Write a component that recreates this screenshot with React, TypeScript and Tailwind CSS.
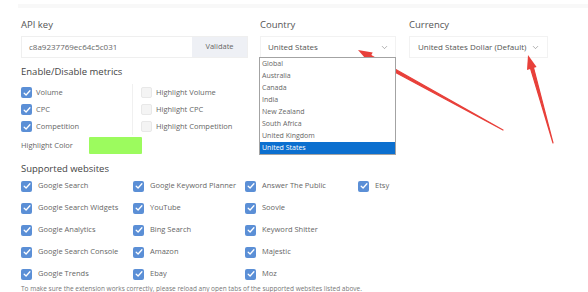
import React from 'react';
import { ChevronDown } from 'lucide-react';

const countries = ['Global', 'Australia', 'Canada', 'India', 'New Zealand', 'South Africa', 'United Kingdom', 'United States'];

const sites = [
  ['Google Search', 'Google Keyword Planner', 'Answer The Public', 'Etsy'],
  ['Google Search Widgets', 'YouTube', 'Soovle', ''],
  ['Google Analytics', 'Bing Search', 'Keyword Shitter', ''],
  ['Google Search Console', 'Amazon', 'Majestic', ''],
  ['Google Trends', 'Ebay', 'Moz', ''],
];

const Box: React.FC<{ checked?: boolean }> = ({ checked = true }) =>
  checked ? (
    <span className="w-[11px] h-[11px] rounded-[2px] bg-[#5b8fd6] flex items-center justify-center shrink-0">
      <svg width="8" height="8" viewBox="0 0 8 8">
        <path d="M1.2 4.2 L3.1 6 L6.9 1.8" fill="none" stroke="white" strokeWidth="1.3" strokeLinecap="round" strokeLinejoin="round" />
      </svg>
    </span>
  ) : (
    <span className="w-[11px] h-[11px] rounded-[2px] bg-[#f4f4f4] border border-[#e8e8e8] shrink-0" />
  );

const Metric: React.FC<{ label: string; checked?: boolean }> = ({ label, checked }) => (
  <div className="h-[17px] flex items-center gap-[4px]">
    <Box checked={checked} />
    <span className="text-[7.5px] text-[#666]">{label}</span>
  </div>
);

const App: React.FC = () => {
  return (
    <div className="relative w-[588px] h-[292px] overflow-hidden bg-white" style={{ fontFamily: '"Open Sans", "Noto Sans", sans-serif' }}>
      <div className="h-[4px] mt-[4px] ml-[18px] bg-[#f8f8f8]"></div>

      <div className="pl-[21px] pt-[11px]">
        <div className="flex">
          <div className="w-[227px]">
            <div className="text-[9.5px] leading-[12px] text-[#555]">API key</div>
            <div className="mt-[5px] flex h-[22px] border border-[#efefef]">
              <div className="flex-1 flex items-center pl-[7px] text-[8px] text-[#666]">c8a9237769ec64c5c031</div>
              <div className="w-[55px] bg-[#eef0f5] flex items-center justify-center text-[7.5px] text-[#666]">Validate</div>
            </div>
          </div>

          <div className="w-[136px] ml-[12px]">
            <div className="text-[9.5px] leading-[12px] text-[#555]">Country</div>
            <div className="relative mt-[5px]">
              <div className="flex items-center justify-between h-[22px] border border-[#f2f2f2] pl-[7px] pr-[6px] text-[8px] text-[#555]">
                <span>United States</span>
                <ChevronDown className="w-[9px] h-[9px] text-[#777]" strokeWidth={1.5} />
              </div>
              <div className="absolute left-[-1px] top-[21px] w-[137px] border border-[#a3a3a3] bg-white z-10">
                {countries.map((c) => (
                  <div
                    key={c}
                    className={
                      c === 'United States'
                        ? 'h-[12px] flex items-center pl-[2px] text-[7px] bg-[#0b6fcf] text-white'
                        : 'h-[12px] flex items-center pl-[2px] text-[7px] text-[#666]'
                    }
                  >
                    {c}
                  </div>
                ))}
              </div>
            </div>
          </div>

          <div className="w-[139px] ml-[13px]">
            <div className="text-[9.5px] leading-[12px] text-[#555]">Currency</div>
            <div className="mt-[5px] flex items-center justify-between h-[22px] border border-[#f2f2f2] pl-[8px] pr-[7px] text-[8px] text-[#555]">
              <span>United States Dollar (Default)</span>
              <ChevronDown className="w-[9px] h-[9px] text-[#777]" strokeWidth={1.5} />
            </div>
          </div>
        </div>

        <div className="mt-[8px] text-[9.5px] leading-[12px] text-[#444]">Enable/Disable metrics</div>
        <div className="mt-[6px] flex">
          <div className="w-[112px] border-r border-[#f0f0f0]">
            <Metric label="Volume" />
            <Metric label="CPC" />
            <Metric label="Competition" />
          </div>
          <div className="pl-[8px]">
            <Metric label="Highlight Volume" checked={false} />
            <Metric label="Highlight CPC" checked={false} />
            <Metric label="Highlight Competition" checked={false} />
          </div>
        </div>

        <div className="mt-[2px] flex items-center">
          <span className="w-[68px] text-[7.5px] text-[#666]">Highlight Color</span>
          <span className="w-[53px] h-[17px] bg-[#9cfb5e] rounded-[1px]"></span>
        </div>

        <div className="mt-[9px] text-[9.5px] leading-[12px] text-[#444]">Supported websites</div>
        <div className="grid grid-cols-[112px_112px_113px_112px]">
          {sites.flat().map((s, i) => (
            <div key={i} className="h-[22px] flex items-center gap-[6px]">
              {s && <Box />}
              {s && <span className="text-[7.5px] text-[#666]">{s}</span>}
            </div>
          ))}
        </div>
        <div className="text-[6.5px] leading-[7px] text-[#777] whitespace-nowrap">
          To make sure the extension works correctly, please reload any open tabs of the supported websites listed above.
        </div>
      </div>

      <svg className="absolute inset-0 pointer-events-none" width="588" height="292">
        <path d="M503 130 L371 55.5 L369.5 58.5 Z" fill="#e8403a" stroke="#e8403a" strokeWidth="1.2" strokeLinejoin="round" />
        <polygon points="358,50 372.7,52.4 367.9,61.2" fill="#e8403a" />
        <path d="M553 143 L530.5 68.4 L533.5 67.6 Z" fill="#e8403a" stroke="#e8403a" strokeWidth="1.2" strokeLinejoin="round" />
        <polygon points="528,55 536.6,67.1 527,69.9" fill="#e8403a" />
      </svg>
    </div>
  );
};

export default App;
